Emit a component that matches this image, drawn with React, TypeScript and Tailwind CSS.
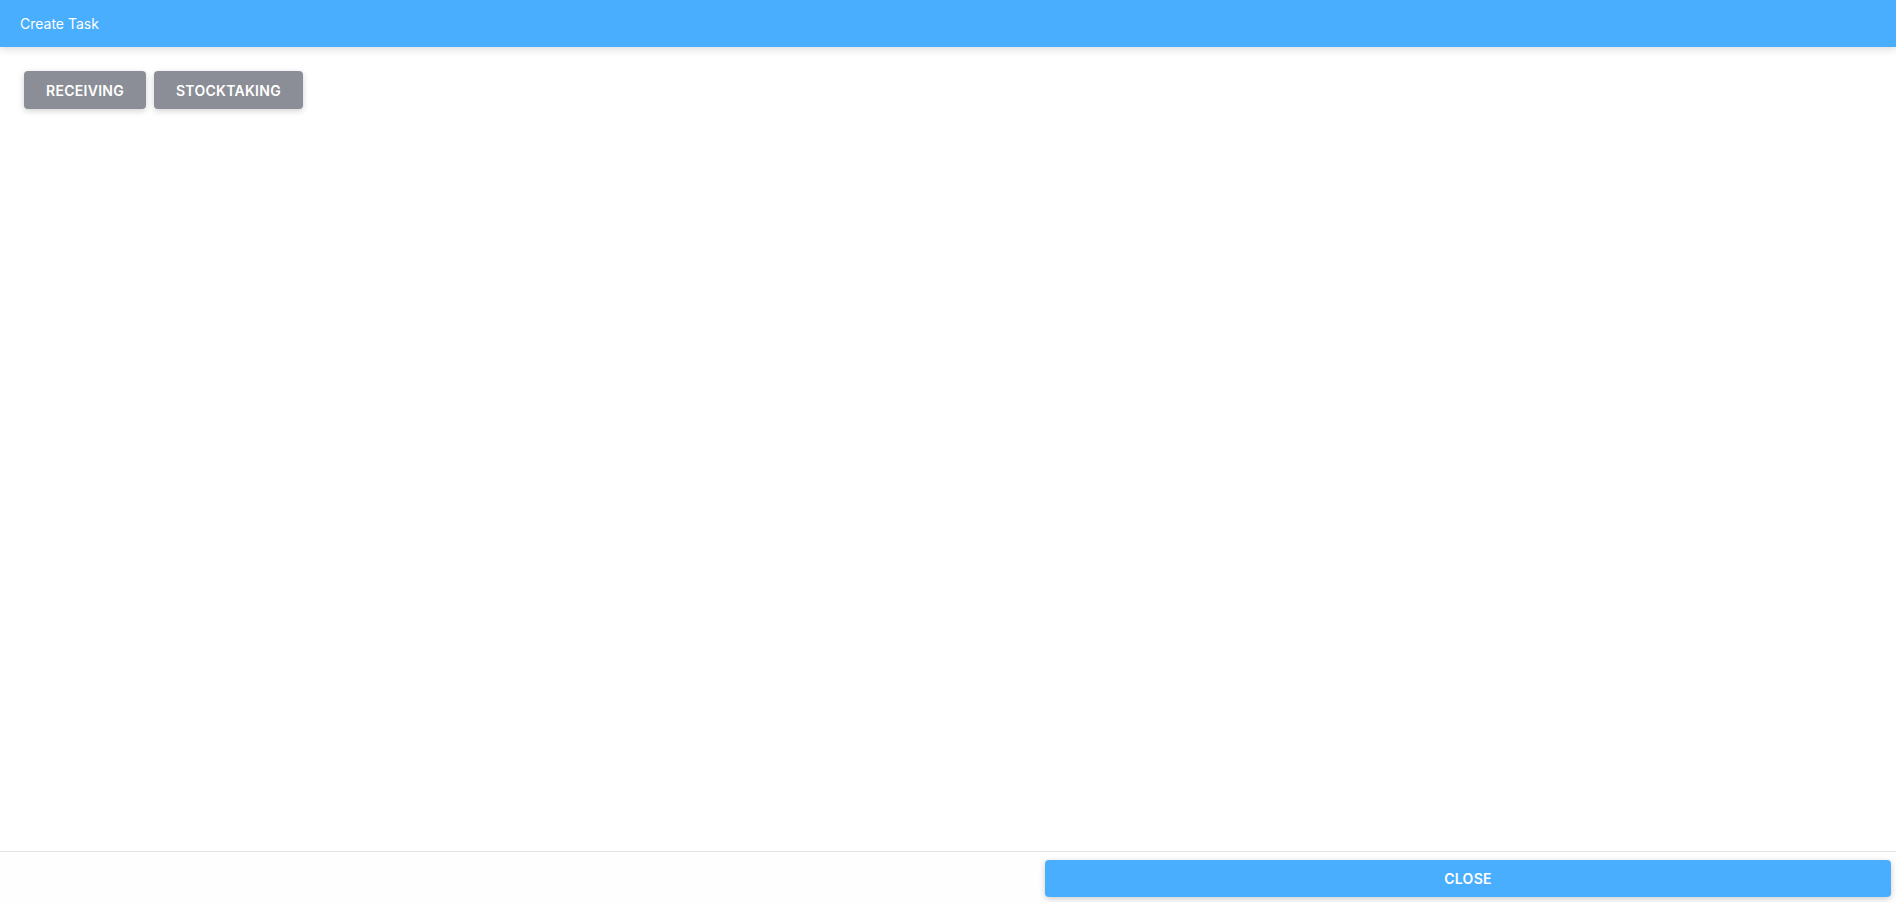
export default function App() {
  const tasks = ["RECEIVING", "STOCKTAKING"]

  return (
    <div className="h-[902px] w-full flex flex-col bg-white font-['Inter','Liberation_Sans',sans-serif]">
      <header className="h-[47px] shrink-0 flex items-center px-5 bg-[#49aefd] text-white text-[14px] shadow-[0_2px_8px_rgba(0,0,0,0.15)] relative z-10">
        Create Task
      </header>

      <main className="flex-1 px-6 pt-6">
        <div className="flex gap-2">
          {tasks.map((t) => (
            <button
              key={t}
              className="h-[38px] px-[22px] rounded bg-[#8b8e96] text-white text-[14px] font-semibold tracking-[0.02em] shadow-[0_2px_6px_rgba(0,0,0,0.18)]"
            >
              {t}
            </button>
          ))}
        </div>
      </main>

      <footer className="h-[51px] shrink-0 border-t border-[#e4e4e4] bg-[#fefefe] flex justify-end pt-2 pr-[5px]">
        <button className="w-[846px] h-[37px] rounded bg-[#49aefd] text-white text-[14px] font-semibold tracking-[0.02em] shadow-[0_2px_6px_rgba(0,0,0,0.2)]">
          CLOSE
        </button>
      </footer>
    </div>
  )
}
